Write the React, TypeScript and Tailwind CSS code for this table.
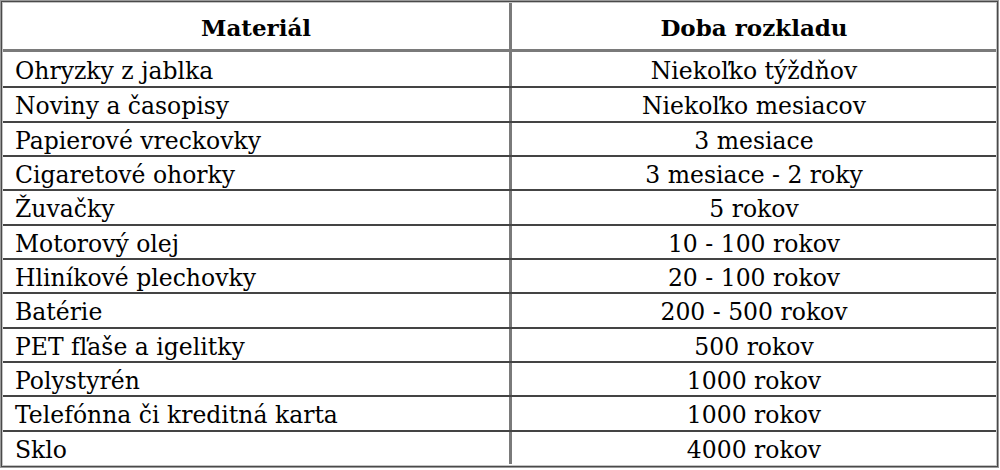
const rows: [string, string][] = [
  ["Ohryzky z jablka", "Niekoľko týždňov"],
  ["Noviny a časopisy", "Niekoľko mesiacov"],
  ["Papierové vreckovky", "3 mesiace"],
  ["Cigaretové ohorky", "3 mesiace - 2 roky"],
  ["Žuvačky", "5 rokov"],
  ["Motorový olej", "10 - 100 rokov"],
  ["Hliníkové plechovky", "20 - 100 rokov"],
  ["Batérie", "200 - 500 rokov"],
  ["PET fľaše a igelitky", "500 rokov"],
  ["Polystyrén", "1000 rokov"],
  ["Telefónna či kreditná karta", "1000 rokov"],
  ["Sklo", "4000 rokov"],
];

export default function App() {
  return (
    <div className="w-[1000px] h-[470px] bg-white font-['DejaVu_Serif',serif] text-black leading-none">
      {/* outer 3d frame */}
      <div className="w-[999px] h-[468px] border border-[#9a9a9a] shadow-[inset_0_0_0_1px_#4a4a4a,inset_0_0_0_2px_#c4c4c4] p-[2px] flex flex-col overflow-hidden">
        {/* header */}
        <div className="grid grid-cols-[509px_1fr] h-[49px] border-b-[3px] border-[#7a7a7a] shrink-0">
          <div className="flex items-center justify-center pt-[2px] text-[23px] font-bold border-r-[3px] border-[#7a7a7a]">
            Materiál
          </div>
          <div className="flex items-center justify-center pt-[2px] text-[23px] font-bold">
            Doba rozkladu
          </div>
        </div>
        {/* body */}
        <div className="h-[412px] grid grid-rows-[repeat(12,minmax(0,1fr))]">
          {rows.map(([m, d], i) => (
            <div
              key={m}
              className={
                "grid grid-cols-[509px_1fr] min-h-0 " +
                (i > 0 ? "border-t-2 border-[#444]" : "")
              }
            >
              <div className="flex items-center pl-[12px] pt-[5px] text-[23.5px] border-r-[3px] border-[#7a7a7a]">
                {m}
              </div>
              <div className="flex items-center justify-center pt-[5px] text-[23.5px]">{d}</div>
            </div>
          ))}
        </div>
      </div>
    </div>
  );
}
